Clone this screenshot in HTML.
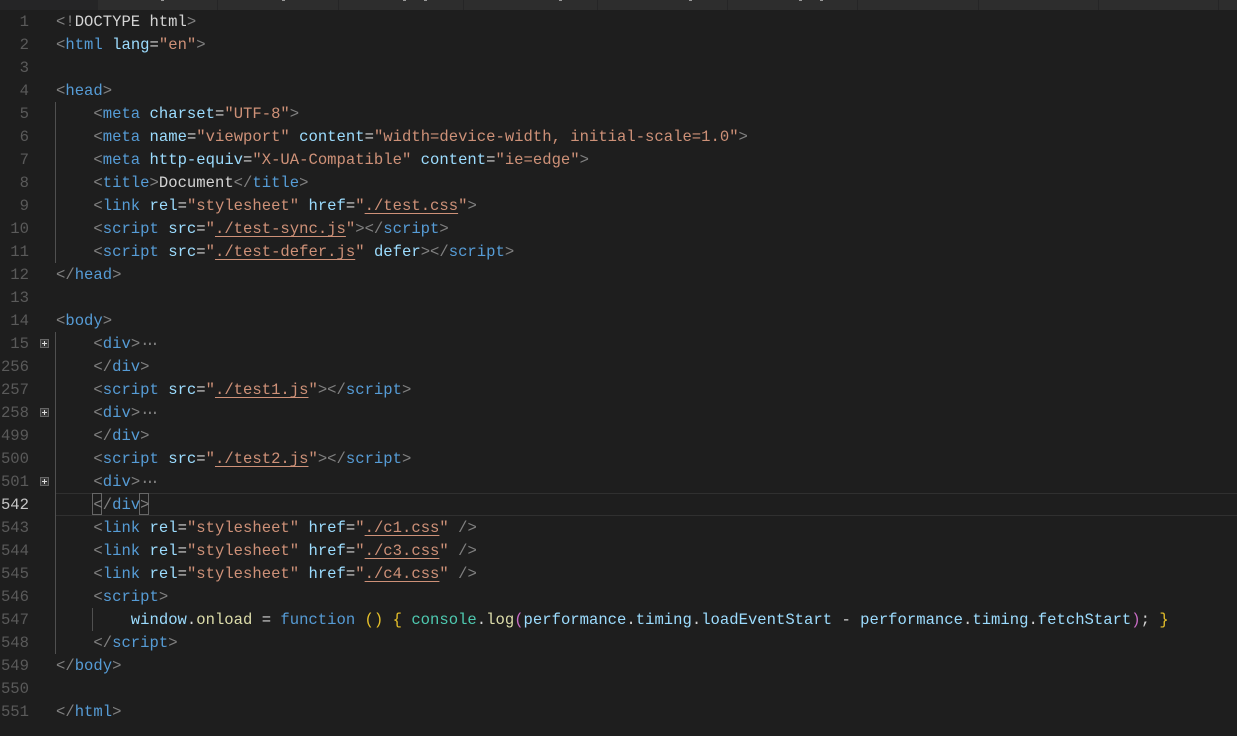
<!DOCTYPE html>
<html lang="en">
<head>
<meta charset="utf-8">
<title>Editor</title>
<style>
html,body{margin:0;padding:0;background:#1e1e1e;}
body{width:1237px;height:736px;position:relative;overflow:hidden;font-family:"Liberation Mono",monospace;font-size:15.58px;}
.tabs{position:absolute;left:0;top:0;width:1237px;height:10px;background:#252526;}
.tabs .t{position:absolute;left:98px;top:0;right:0;height:10px;background:#2d2d2d;}
.sep{position:absolute;top:0;width:1px;height:10px;background:#252526;}
.speck{position:absolute;top:0;width:3px;height:1px;background:#999;}
.cur{position:absolute;left:56px;right:0;top:493px;height:21px;border-top:1px solid #303030;border-bottom:1px solid #303030;}
.n,.l{position:absolute;height:23px;line-height:23px;white-space:pre;margin-top:1px;}
.n{left:0;width:29px;text-align:right;color:#5a5a5a;}
.n.a{color:#c6c6c6;}
.l{left:56px;color:#d4d4d4;}
.b{color:#808080}.t1{color:#569cd6}.a1{color:#9cdcfe}.s{color:#ce9178}
.u{color:#ce9178;text-decoration:underline;text-underline-offset:3px;text-decoration-skip-ink:none;}
.f{color:#dcdcaa}.y{color:#e6c02a}.p{color:#c86bc4}.g{color:#4ec9b0}
.d{color:#808080;letter-spacing:-4.3px}
.guide{position:absolute;width:1px;background:#505050;}
.fold{position:absolute;left:40px;width:7px;height:7px;background:#3a3a3a;border:1px solid #666;}
.fold:before{content:"";position:absolute;left:1px;top:3px;width:5px;height:1px;background:#ddd;}
.fold:after{content:"";position:absolute;left:3px;top:1px;width:1px;height:5px;background:#ddd;}
.box{position:absolute;top:493px;width:8px;height:20px;border:1px solid #666;}
</style>
</head>
<body>
<div class="tabs"><div class="t"></div>
<div class="sep" style="left:217px"></div><div class="sep" style="left:338px"></div><div class="sep" style="left:463px"></div><div class="sep" style="left:597px"></div><div class="sep" style="left:727px"></div><div class="sep" style="left:857px"></div><div class="sep" style="left:978px"></div><div class="sep" style="left:1098px"></div><div class="sep" style="left:1218px"></div>
<div class="speck" style="left:161px"></div><div class="speck" style="left:282px"></div><div class="speck" style="left:403px"></div><div class="speck" style="left:424px"></div><div class="speck" style="left:559px"></div><div class="speck" style="left:689px"></div><div class="speck" style="left:799px"></div><div class="speck" style="left:820px"></div>
</div>
<div class="cur"></div>
<div class="guide" style="left:55px;top:102px;height:161px"></div>
<div class="guide" style="left:55px;top:332px;height:322px"></div>
<div class="guide" style="left:92px;top:608px;height:23px"></div>
<div class="fold" style="top:339px"></div>
<div class="fold" style="top:408px"></div>
<div class="fold" style="top:477px"></div>
<div class="box" style="left:92px"></div>
<div class="box" style="left:139px"></div>

<div class="n" style="top:10px">1</div><div class="l" style="top:10px"><span class="b">&lt;!</span>DOCTYPE html<span class="b">&gt;</span></div>
<div class="n" style="top:33px">2</div><div class="l" style="top:33px"><span class="b">&lt;</span><span class="t1">html</span> <span class="a1">lang</span>=<span class="s">"en"</span><span class="b">&gt;</span></div>
<div class="n" style="top:56px">3</div>
<div class="n" style="top:79px">4</div><div class="l" style="top:79px"><span class="b">&lt;</span><span class="t1">head</span><span class="b">&gt;</span></div>
<div class="n" style="top:102px">5</div><div class="l" style="top:102px">    <span class="b">&lt;</span><span class="t1">meta</span> <span class="a1">charset</span>=<span class="s">"UTF-8"</span><span class="b">&gt;</span></div>
<div class="n" style="top:125px">6</div><div class="l" style="top:125px">    <span class="b">&lt;</span><span class="t1">meta</span> <span class="a1">name</span>=<span class="s">"viewport"</span> <span class="a1">content</span>=<span class="s">"width=device-width, initial-scale=1.0"</span><span class="b">&gt;</span></div>
<div class="n" style="top:148px">7</div><div class="l" style="top:148px">    <span class="b">&lt;</span><span class="t1">meta</span> <span class="a1">http-equiv</span>=<span class="s">"X-UA-Compatible"</span> <span class="a1">content</span>=<span class="s">"ie=edge"</span><span class="b">&gt;</span></div>
<div class="n" style="top:171px">8</div><div class="l" style="top:171px">    <span class="b">&lt;</span><span class="t1">title</span><span class="b">&gt;</span>Document<span class="b">&lt;/</span><span class="t1">title</span><span class="b">&gt;</span></div>
<div class="n" style="top:194px">9</div><div class="l" style="top:194px">    <span class="b">&lt;</span><span class="t1">link</span> <span class="a1">rel</span>=<span class="s">"stylesheet"</span> <span class="a1">href</span>=<span class="s">"</span><span class="u">./test.css</span><span class="s">"</span><span class="b">&gt;</span></div>
<div class="n" style="top:217px">10</div><div class="l" style="top:217px">    <span class="b">&lt;</span><span class="t1">script</span> <span class="a1">src</span>=<span class="s">"</span><span class="u">./test-sync.js</span><span class="s">"</span><span class="b">&gt;&lt;/</span><span class="t1">script</span><span class="b">&gt;</span></div>
<div class="n" style="top:240px">11</div><div class="l" style="top:240px">    <span class="b">&lt;</span><span class="t1">script</span> <span class="a1">src</span>=<span class="s">"</span><span class="u">./test-defer.js</span><span class="s">"</span> <span class="a1">defer</span><span class="b">&gt;&lt;/</span><span class="t1">script</span><span class="b">&gt;</span></div>
<div class="n" style="top:263px">12</div><div class="l" style="top:263px"><span class="b">&lt;/</span><span class="t1">head</span><span class="b">&gt;</span></div>
<div class="n" style="top:286px">13</div>
<div class="n" style="top:309px">14</div><div class="l" style="top:309px"><span class="b">&lt;</span><span class="t1">body</span><span class="b">&gt;</span></div>
<div class="n" style="top:332px">15</div><div class="l" style="top:332px">    <span class="b">&lt;</span><span class="t1">div</span><span class="b">&gt;</span><span class="d">···</span></div>
<div class="n" style="top:355px">256</div><div class="l" style="top:355px">    <span class="b">&lt;/</span><span class="t1">div</span><span class="b">&gt;</span></div>
<div class="n" style="top:378px">257</div><div class="l" style="top:378px">    <span class="b">&lt;</span><span class="t1">script</span> <span class="a1">src</span>=<span class="s">"</span><span class="u">./test1.js</span><span class="s">"</span><span class="b">&gt;&lt;/</span><span class="t1">script</span><span class="b">&gt;</span></div>
<div class="n" style="top:401px">258</div><div class="l" style="top:401px">    <span class="b">&lt;</span><span class="t1">div</span><span class="b">&gt;</span><span class="d">···</span></div>
<div class="n" style="top:424px">499</div><div class="l" style="top:424px">    <span class="b">&lt;/</span><span class="t1">div</span><span class="b">&gt;</span></div>
<div class="n" style="top:447px">500</div><div class="l" style="top:447px">    <span class="b">&lt;</span><span class="t1">script</span> <span class="a1">src</span>=<span class="s">"</span><span class="u">./test2.js</span><span class="s">"</span><span class="b">&gt;&lt;/</span><span class="t1">script</span><span class="b">&gt;</span></div>
<div class="n" style="top:470px">501</div><div class="l" style="top:470px">    <span class="b">&lt;</span><span class="t1">div</span><span class="b">&gt;</span><span class="d">···</span></div>
<div class="n a" style="top:493px">542</div><div class="l" style="top:493px">    <span class="b">&lt;/</span><span class="t1">div</span><span class="b">&gt;</span></div>
<div class="n" style="top:516px">543</div><div class="l" style="top:516px">    <span class="b">&lt;</span><span class="t1">link</span> <span class="a1">rel</span>=<span class="s">"stylesheet"</span> <span class="a1">href</span>=<span class="s">"</span><span class="u">./c1.css</span><span class="s">"</span> <span class="b">/&gt;</span></div>
<div class="n" style="top:539px">544</div><div class="l" style="top:539px">    <span class="b">&lt;</span><span class="t1">link</span> <span class="a1">rel</span>=<span class="s">"stylesheet"</span> <span class="a1">href</span>=<span class="s">"</span><span class="u">./c3.css</span><span class="s">"</span> <span class="b">/&gt;</span></div>
<div class="n" style="top:562px">545</div><div class="l" style="top:562px">    <span class="b">&lt;</span><span class="t1">link</span> <span class="a1">rel</span>=<span class="s">"stylesheet"</span> <span class="a1">href</span>=<span class="s">"</span><span class="u">./c4.css</span><span class="s">"</span> <span class="b">/&gt;</span></div>
<div class="n" style="top:585px">546</div><div class="l" style="top:585px">    <span class="b">&lt;</span><span class="t1">script</span><span class="b">&gt;</span></div>
<div class="n" style="top:608px">547</div><div class="l" style="top:608px">        <span class="a1">window</span>.<span class="f">onload</span> = <span class="t1">function</span> <span class="y">()</span> <span class="y">{</span> <span class="g">console</span>.<span class="f">log</span><span class="p">(</span><span class="a1">performance</span>.<span class="a1">timing</span>.<span class="a1">loadEventStart</span> - <span class="a1">performance</span>.<span class="a1">timing</span>.<span class="a1">fetchStart</span><span class="p">)</span>; <span class="y">}</span></div>
<div class="n" style="top:631px">548</div><div class="l" style="top:631px">    <span class="b">&lt;/</span><span class="t1">script</span><span class="b">&gt;</span></div>
<div class="n" style="top:654px">549</div><div class="l" style="top:654px"><span class="b">&lt;/</span><span class="t1">body</span><span class="b">&gt;</span></div>
<div class="n" style="top:677px">550</div>
<div class="n" style="top:700px">551</div><div class="l" style="top:700px"><span class="b">&lt;/</span><span class="t1">html</span><span class="b">&gt;</span></div>
</body>
</html>
